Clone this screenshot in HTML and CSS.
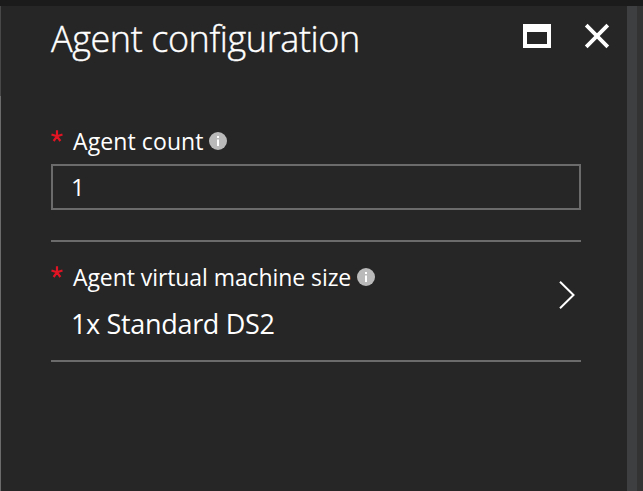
FILE: index.html
```html
<!DOCTYPE html>
<html lang="en">
<head>
<meta charset="utf-8">
<title>Agent configuration</title>
<link rel="stylesheet" href="styles.css">
</head>
<body>
<div class="topbar"></div>
<div class="shell">
  <div class="edge"></div>
  <main class="blade">
    <header class="header">
      <h1 class="title"><span>Agent configuration</span></h1>
      <div class="actions">
        <svg class="maximize" width="28" height="24" viewBox="0 0 28 24"><path fill="#fff" fill-rule="evenodd" d="M0 0h28v24H0zM4 8v12h20V8z"/></svg>
        <svg class="close" width="26" height="26" viewBox="0 0 26 26"><path d="M2.2 2.2 23.8 23.8M23.8 2.2 2.2 23.8" stroke="#fff" stroke-width="3.8"/></svg>
      </div>
    </header>
    <section class="count">
      <div class="label">
        <svg class="star" width="12" height="12" viewBox="0 0 12 12"><path d="M6 6.3V.3M6 6.3.5 4.5M6 6.3l5.5-1.8M6 6.3 2.6 11M6 6.3 9.4 11" stroke="#e11423" stroke-width="2.2"/></svg>
        <span class="text text-count">Agent count</span>
        <svg class="info" width="18" height="18" viewBox="0 0 18 18"><circle cx="9" cy="9" r="9" fill="#bababa"/><path d="M8 4h2v2H8zM8 7.500h2V14H8z" fill="#fff"/></svg>
      </div>
      <div class="input"><span>1</span></div>
    </section>
    <section class="size">
      <div class="size-body">
        <div class="label">
          <svg class="star" width="12" height="12" viewBox="0 0 12 12"><path d="M6 6.3V.3M6 6.3.5 4.5M6 6.3l5.500-1.8M6 6.3 2.6 11M6 6.3 9.4 11" stroke="#e11423" stroke-width="2.2"/></svg>
          <span class="text text-size">Agent virtual machine size</span>
          <svg class="info" width="18" height="18" viewBox="0 0 18 18"><circle cx="9" cy="9" r="9" fill="#bababa"/><path d="M8 4h2v2H8zM8 7.500h2V14H8z" fill="#fff"/></svg>
        </div>
        <div class="value"><span>1x Standard DS2</span></div>
      </div>
      <svg class="chevron" width="17" height="28" viewBox="0 0 17 28"><path d="M1 .8 14.500 14 1 27.200" fill="none" stroke="#fff" stroke-width="2"/></svg>
    </section>
  </main>
  <div class="scrollbar"></div>
  <div class="gutter"></div>
</div>
</body>
</html>
```
FILE: styles.css
```css
* { box-sizing: border-box; }
body {
  margin: 0;
  height: 491px;
  overflow: hidden;
  display: flex;
  flex-direction: column;
  background: #262626;
  color: #fff;
  font-family: "Segoe UI", "Open Sans", "Noto Sans", sans-serif;
}
svg { display: block; flex: none; }
.topbar { height: 6px; background: #1b1b1b; }
.shell { flex: 1; display: flex; }
.edge { width: 1px; background: linear-gradient(#484848 90px, #6b6b6b 90px); }
.blade { flex: 1; padding: 0 46px 0 50px; }
.scrollbar { width: 10px; background: #3e3f40; }
.gutter { width: 6px; background: #333; }
.header {
  display: flex;
  justify-content: space-between;
  height: 122px;
  margin-right: -29px;
}
.title {
  margin: 8px 0 0;
  font-size: 36px;
  line-height: 50px;
  font-weight: 300;
  letter-spacing: -0.42px;
  white-space: nowrap;
  -webkit-text-stroke: 0.4px #fff;
}
.actions { display: flex; gap: 33px; padding-top: 18px; }
.close { margin-top: -1px; }
.label {
  display: flex;
  height: 28px;
  white-space: nowrap;
  font-size: 23px;
  line-height: 26px;
}
.star { margin-top: 2px; }
.text { margin-left: 10px; }
.text-count { letter-spacing: 0.1px; margin-right: -1px; }
.text-size { letter-spacing: -0.08px; }
.info { margin: 4px 0 0 6px; }
.input {
  height: 46px;
  margin-top: 8px;
  border: 2px solid #6b6b6b;
  padding-left: 18px;
  font-size: 24px;
  line-height: 41px;
}
.size {
  display: flex;
  justify-content: space-between;
  height: 122px;
  margin-top: 30px;
  padding-top: 22px;
  border: solid #6b6b6b;
  border-width: 2px 0;
}
.value {
  margin: 14px 0 0 20px;
  font-size: 27px;
  line-height: 36px;
  letter-spacing: -0.33px;
}
.chevron { margin: 17px 5px 0 0; }
```
